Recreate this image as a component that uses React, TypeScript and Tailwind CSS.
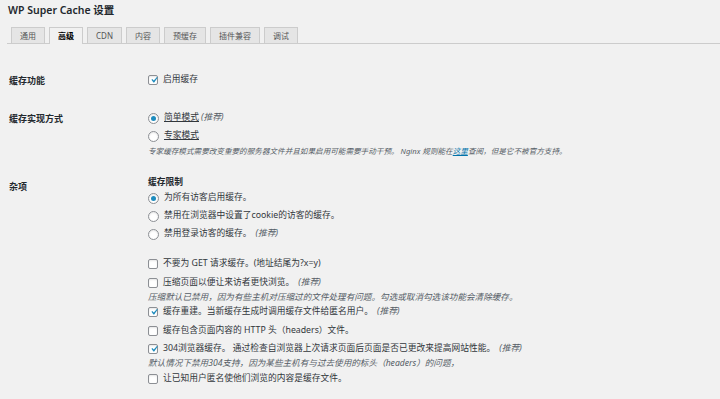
import { ReactNode } from "react";

const font = "font-['Noto_Sans','Noto_Sans_CJK_SC',sans-serif]";

const tabs = ["通用", "高级", "CDN", "内容", "预缓存", "插件兼容", "调试"];

const Check = ({ checked }: { checked?: boolean }) => (
  <span className="relative flex h-[10px] w-[10px] shrink-0 items-center justify-center rounded-[2px] border border-[#8c8f94] bg-white shadow-[inset_0_1px_2px_rgba(0,0,0,0.1)]">
    {checked && (
      <svg viewBox="0 0 20 20" className="absolute -top-[2px] -left-[1px] h-[12px] w-[12px]">
        <path d="M14.83 4.89l1.34.94-5.81 8.38H9.02L5.78 9.67l1.34-1.25 2.57 2.4z" fill="#1e8cbe" />
      </svg>
    )}
  </span>
);

const Radio = ({ checked }: { checked?: boolean }) => (
  <span className="flex h-[11px] w-[11px] shrink-0 items-center justify-center rounded-full border border-[#8c8f94] bg-white shadow-[inset_0_1px_2px_rgba(0,0,0,0.1)]">
    {checked && <span className="h-[5px] w-[5px] rounded-full bg-[#1e8cbe]" />}
  </span>
);

const Rec = () => <i className="ml-[4px] text-[#555d66]">(推荐)</i>;

const Option = ({ control, children, h = "h-[18px]" }: { control: ReactNode; children: ReactNode; h?: string }) => (
  <div className={`flex ${h} items-center gap-[5px] text-[8.75px] text-[#32373c]`}>
    {control}
    <span className="whitespace-nowrap">{children}</span>
  </div>
);

const Desc = ({ children, h, size }: { children: ReactNode; h: string; size: string }) => (
  <div className={`flex ${h} ${size} items-center whitespace-nowrap text-[#555d66] italic`}>{children}</div>
);

const Row = ({ label, mt, children }: { label: string; mt: string; children: ReactNode }) => (
  <div className={`flex ${mt}`}>
    <div className="mt-[1px] flex h-[18px] w-[139px] items-center text-[9px] font-bold text-[#23282d]">{label}</div>
    <div className="flex flex-col">{children}</div>
  </div>
);

export default function App() {
  return (
    <div className={`${font} h-[399px] w-[720px] overflow-hidden bg-[#f1f1f1]`}>
      <div className="flex h-[22px] items-center pl-[8px] text-[10.5px] font-semibold text-[#23282d]">
        WP Super Cache 设置
      </div>

      <div className="mt-[5px] ml-[7px] flex gap-[4px] border-b border-[#ccc] pl-[4px]">
        {tabs.map((tab) => (
          <div
            key={tab}
            className={
              tab === "高级"
                ? "-mb-[1px] flex h-[17px] items-center border border-b-0 border-[#ccc] bg-[#f1f1f1] px-[8px] text-[8px] font-bold text-black"
                : "flex h-[16px] items-center border border-b-0 border-[#ccc] bg-[#e5e5e5] px-[8px] text-[8px] text-[#555]"
            }
          >
            {tab}
          </div>
        ))}
      </div>

      <div className="pl-[9px]">
        <Row label="缓存功能" mt="mt-[27px]">
          <Option control={<Check checked />}>启用缓存</Option>
        </Row>

        <Row label="缓存实现方式" mt="mt-[19px]">
          <Option control={<Radio checked />}>
            <span className="underline">简单模式</span>
            <i className="ml-[2px] text-[#555d66]">(推荐)</i>
          </Option>
          <Option control={<Radio />}>
            <span className="underline">专家模式</span>
          </Option>
          <Desc h="h-[14px]" size="text-[7.6px]">
            专家缓存模式需要改变重要的服务器文件并且如果启用可能需要手动干预。 Nginx 规则能在
            <a className="text-[#0073aa] underline">这里</a>查阅，但是它不被官方支持。
          </Desc>
        </Row>

        <Row label="杂项" mt="mt-[18px]">
          <div className="flex h-[12px] items-center text-[8.75px] font-bold text-[#23282d]">缓存限制</div>
          <Option control={<Radio checked />}>为所有访客启用缓存。</Option>
          <Option control={<Radio />}>禁用在浏览器中设置了cookie的访客的缓存。</Option>
          <Option control={<Radio />}>
            禁用登录访客的缓存。
            <Rec />
          </Option>

          <div className="mt-[11px]">
            <Option control={<Check />} h="h-[19px]">
              不要为 GET 请求缓存。(地址结尾为?x=y)
            </Option>
            <Option control={<Check />} h="h-[19px]">
              压缩页面以便让来访者更快浏览。
              <Rec />
            </Option>
            <Desc h="h-[10px]" size="text-[8.6px]">
              压缩默认已禁用，因为有些主机对压缩过的文件处理有问题。勾选或取消勾选该功能会清除缓存。
            </Desc>
            <Option control={<Check checked />} h="h-[19px]">
              缓存重建。当新缓存生成时调用缓存文件给匿名用户。
              <Rec />
            </Option>
            <Option control={<Check />} h="h-[19px]">
              缓存包含页面内容的 HTTP 头（headers）文件。
            </Option>
            <Option control={<Check checked />}>
              304浏览器缓存。 通过检查自浏览器上次请求页面后页面是否已更改来提高网站性能。
              <Rec />
            </Option>
            <Desc h="h-[11px]" size="text-[8.6px]">
              默认情况下禁用304支持，因为某些主机有与过去使用的标头（headers）的问题，
            </Desc>
            <Option control={<Check />} h="h-[19px]">
              让已知用户匿名使他们浏览的内容是缓存文件。
            </Option>
          </div>
        </Row>
      </div>
    </div>
  );
}
